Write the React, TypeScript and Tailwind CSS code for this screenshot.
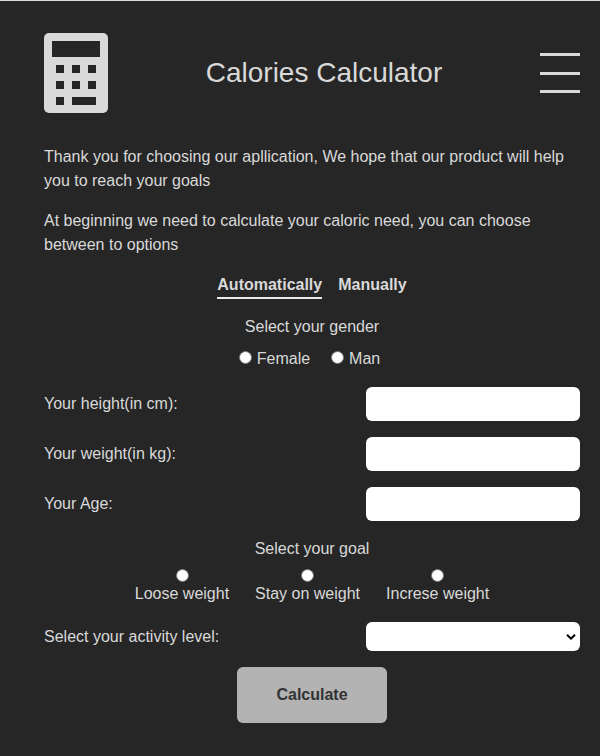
import React from "react";

function CalculatorIcon() {
  return (
    <svg width="64" height="80" viewBox="0 0 64 80" aria-hidden="true">
      <rect width="64" height="80" rx="5" fill="#d9d9d9" />
      <path
        fill="#262626"
        d="M8 8h48v16H8zM12 32h8v8h-8zM28 32h8v8h-8zM44 32h8v8h-8zM12 48h8v8h-8zM28 48h8v8h-8zM44 48h8v8h-8zM12 64h8v8h-8zM28 64h24v8H28z"
      />
    </svg>
  );
}

function Radio({ name }: { name: string }) {
  return (
    <input
      type="radio"
      name={name}
      className="block size-[13px] shrink-0 appearance-none rounded-full border border-[#767676] bg-white"
    />
  );
}

function Field({ label }: { label: string }) {
  return (
    <label className="flex h-[34px] items-center justify-between">
      <span>{label}</span>
      <input type="text" className="h-full w-[214px] rounded-md bg-white px-3 text-black" />
    </label>
  );
}

export default function App() {
  return (
    <main className="h-[756px] w-[600px] overflow-hidden border-t border-[#d9dedb] bg-[#262626] pr-5 pl-11 pt-8 font-['Liberation_Sans',Arial,sans-serif] text-base text-[#d9d9d9]">
      <header className="flex h-20 items-center justify-between">
        <CalculatorIcon />
        <h1 className="text-[28px] leading-8">Calories Calculator</h1>
        <button aria-label="Menu" className="flex h-10 w-10 flex-col">
          <span className="h-[3px] w-full bg-[#d9d9d9]" />
          <span className="mt-4 h-[3px] w-full bg-[#d9d9d9]" />
          <span className="mt-[15px] h-[3px] w-full bg-[#d9d9d9]" />
        </button>
      </header>

      <p className="mt-8">
        Thank you for choosing our apllication, We hope that our product will help you to reach your goals
      </p>
      <p className="mt-4">
        At beginning we need to calculate your caloric need, you can choose between to options
      </p>

      <nav className="mt-4 flex h-[26px] justify-center gap-4 font-bold">
        <a className="border-b-2 border-[#e6ebe8]">Automatically</a>
        <a>Manually</a>
      </nav>

      <form>
        <p className="mt-4 text-center">Select your gender</p>
        <div className="mt-2 flex justify-center gap-[21px] pr-[5px]">
          <label className="flex gap-[5px]">
            <span className="pt-1"><Radio name="gender" /></span>
            Female
          </label>
          <label className="flex gap-[5px]">
            <span className="pt-1"><Radio name="gender" /></span>
            Man
          </label>
        </div>

        <div className="mt-4 flex flex-col gap-4">
          <Field label="Your height(in cm):" />
          <Field label="Your weight(in kg):" />
          <Field label="Your Age:" />
        </div>

        <p className="mt-4 text-center">Select your goal</p>
        <div className="mt-2 flex justify-center gap-[26px]">
          <label className="flex flex-col items-center"><span className="pl-px"><Radio name="goal" /></span>Loose weight</label>
          <label className="flex flex-col items-center"><Radio name="goal" />Stay on weight</label>
          <label className="flex flex-col items-center"><Radio name="goal" />Increse weight</label>
        </div>

        <label className="mt-4 flex h-[29px] items-center justify-between">
          <span>Select your activity level:</span>
          <span className="flex h-full w-[214px] items-center justify-end rounded-md bg-white pr-1">
            <svg width="10" height="6" viewBox="0 0 10 6" fill="none" stroke="#000" strokeWidth="2" aria-hidden="true">
              <path d="M1 .8 5 4.6 9 .8" />
            </svg>
          </span>
        </label>

        <div className="mt-4 flex justify-center">
          <button type="button" className="h-14 w-[150px] rounded-md bg-[#b3b3b3] font-bold text-[#333]">
            Calculate
          </button>
        </div>
      </form>
    </main>
  );
}
